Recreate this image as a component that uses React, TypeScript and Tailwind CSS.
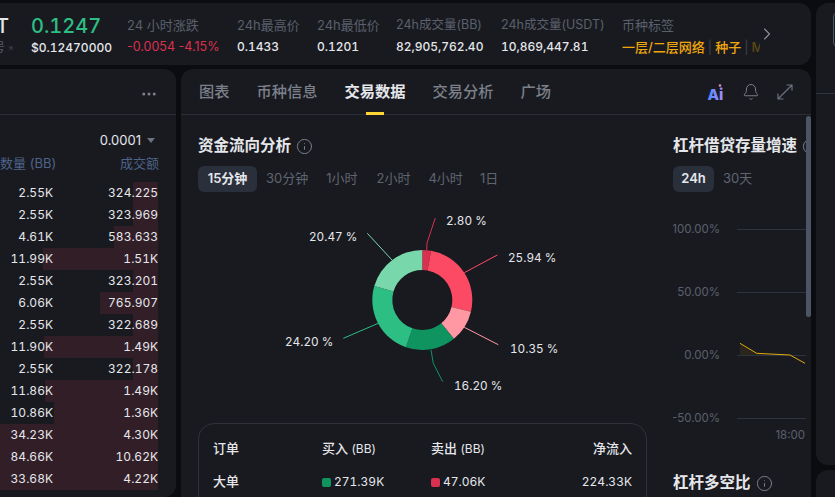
import { ArrowUpRight, Bell, ChevronRight, Ellipsis, Info } from "lucide-react";

const cjk = "font-['Inter','Noto_Sans_CJK_SC',sans-serif]";

const stats = [
    { label: "24h最高价", value: "0.1433", width: "w-[80px]", labelSize: "text-[13px]" },
    { label: "24h最低价", value: "0.1201", width: "w-[79px]", labelSize: "text-[13px]" },
    { label: "24h成交量(BB)", value: "82,905,762.40", width: "w-[105px]", labelSize: "text-[12.5px]" },
    { label: "24h成交量(USDT)", value: "10,869,447.81", width: "w-[121px]", labelSize: "text-[12.5px]" },
];

const trades = [
    { qty: "2.55K", amount: "324.225", bar: 25 },
    { qty: "2.55K", amount: "323.969", bar: 25 },
    { qty: "4.61K", amount: "583.633", bar: 44 },
    { qty: "11.99K", amount: "1.51K", bar: 115 },
    { qty: "2.55K", amount: "323.201", bar: 25 },
    { qty: "6.06K", amount: "765.907", bar: 58 },
    { qty: "2.55K", amount: "322.689", bar: 25 },
    { qty: "11.90K", amount: "1.49K", bar: 114 },
    { qty: "2.55K", amount: "322.178", bar: 25 },
    { qty: "11.86K", amount: "1.49K", bar: 113 },
    { qty: "10.86K", amount: "1.36K", bar: 104 },
    { qty: "34.23K", amount: "4.30K", bar: 158 },
    { qty: "84.66K", amount: "10.62K", bar: 158 },
    { qty: "33.68K", amount: "4.22K", bar: 158 },
];

const flows = [
    { share: 2.8, color: "#d9304f" },
    { share: 25.94, color: "#fd4a64" },
    { share: 10.35, color: "#ff98a2" },
    { share: 16.2, color: "#0f945f" },
    { share: 24.2, color: "#2dbe84" },
    { share: 20.47, color: "#78d8ab" },
];

const leaders = [
    { points: "426.7,250 427,243 435.3,218", color: "#d9304f", label: "2.80 %", x: 446, y: 225 },
    { points: "464.3,272.7 497.3,255", color: "#fd4a64", label: "25.94 %", x: 508, y: 262 },
    { points: "464.3,327.3 498.3,344.7", color: "#ff98a2", label: "10.35 %", x: 510, y: 353 },
    { points: "431,350 433.3,363.3 442.7,381.7", color: "#0f945f", label: "16.20 %", x: 454, y: 390 },
    { points: "378.3,323.3 343.3,338.3", color: "#2dbe84", label: "24.20 %", x: 285, y: 346 },
    { points: "392,260 367.3,233.3", color: "#78d8ab", label: "20.47 %", x: 309, y: 241 },
];

function arc(startPct: number, endPct: number) {
    const cx = 422.3, cy = 300, r = 50, ir = 30;
    const a0 = (startPct / 100) * Math.PI * 2 - Math.PI / 2;
    const a1 = (endPct / 100) * Math.PI * 2 - Math.PI / 2;
    const large = endPct - startPct > 50 ? 1 : 0;
    const p = (rad: number, a: number) => `${(cx + rad * Math.cos(a)).toFixed(2)} ${(cy + rad * Math.sin(a)).toFixed(2)}`;
    return `M${p(r, a0)} A${r} ${r} 0 ${large} 1 ${p(r, a1)} L${p(ir, a1)} A${ir} ${ir} 0 ${large} 0 ${p(ir, a0)} Z`;
}

function Donut() {
    let acc = 0;
    const total = flows.reduce((s, f) => s + f.share, 0);
    return (
        <svg width="280" height="200" viewBox="280 205 280 200" className="block">
            {flows.map((f, i) => {
                const start = acc;
                acc += (f.share / total) * 100;
                return <path key={i} d={arc(start, acc)} fill={f.color} />;
            })}
            {leaders.map((l, i) => (
                <g key={i}>
                    <polyline points={l.points} fill="none" stroke={l.color} strokeWidth="1" />
                    <text x={l.x} y={l.y} fill="#e5e7eb" fontSize="11.75" fontFamily="Inter, sans-serif" className="tabular-nums">{l.label}</text>
                </g>
            ))}
        </svg>
    );
}

function AiMark() {
    return (
        <svg width="17" height="18" viewBox="0 0 17 18">
            <defs>
                <linearGradient id="ai" x1="0" y1="0" x2="1" y2="0">
                    <stop offset="0" stopColor="#4d8dff" />
                    <stop offset="1" stopColor="#a98bff" />
                </linearGradient>
            </defs>
            <text x="0.5" y="17" fill="url(#ai)" fontSize="15" fontWeight="800" fontFamily="Inter, sans-serif">Ai</text>
            <circle cx="13" cy="2.5" r="1.3" fill="#e58ac0" />
        </svg>
    );
}

function Expand() {
    return (
        <svg width="16" height="16" viewBox="0 0 16 16" fill="none" stroke="#6b7280" strokeWidth="1.2">
            <path d="M1 15 15 1M9.5 1H15v5.5M1 9.5V15h5.5" />
        </svg>
    );
}

function MarginChart() {
    const rows = [
        { label: "100.00%", y: 229 },
        { label: "50.00%", y: 292 },
        { label: "0.00%", y: 355 },
        { label: "-50.00%", y: 418 },
    ];
    return (
        <svg width="133" height="230" viewBox="673 215 133 230" className="block">
            {rows.map((r) => (
                <g key={r.label}>
                    <text x="720" y={r.y + 4} textAnchor="end" fill="#5a606c" fontSize="11.5" fontFamily="Inter, sans-serif">{r.label}</text>
                    <line x1="737" x2="806" y1={r.y + 0.5} y2={r.y + 0.5} stroke="#2e343f" />
                </g>
            ))}
            <polygon points="740,343.3 756.7,353.3 790,355 740,355" fill="#f0b90b" fillOpacity="0.08" />
            <polyline points="740,343.3 756.7,353.3 790,355 805,363.3" fill="none" stroke="#e0a90c" strokeWidth="1" />
            <text x="805" y="439" textAnchor="end" fill="#5a606c" fontSize="11.5" fontFamily="Inter, sans-serif">18:00</text>
        </svg>
    );
}

function Ticker() {
    return (
        <div className="flex h-[62px] items-start overflow-hidden rounded-r-xl bg-[#191a20] pt-[10px]">
            <div className="w-[31px] shrink-0">
                <div className="-ml-[4px] text-[20px] font-medium leading-[26px]">T</div>
                <div className="mt-[1px] flex h-[16px] -ml-[7px] items-center text-[12px] text-[#565c68]">
                    <span>号</span>
                    <ArrowUpRight className="ml-[2px] h-[7px] w-[7px]" strokeWidth={2} />
                </div>
            </div>
            <div className="w-[96px] shrink-0 tabular-nums">
                <div className="text-[20px] font-medium leading-[26px] text-[#2dbe84]">0.1247</div>
                <div className="mt-[1px] text-[12px] font-medium leading-[16px]">$0.12470000</div>
            </div>
            <div className="w-[110px] shrink-0 pt-[3px]">
                <div className="text-[13px] leading-[18px] text-[#5a606c]">24 小时涨跌</div>
                <div className="mt-[5px] text-[12.5px] leading-[16px] text-[#d9304f]">-0.0054 -4.15%</div>
            </div>
            {stats.map((s) => (
                <div key={s.label} className={`shrink-0 pt-[3px] ${s.width}`}>
                    <div className={`leading-[18px] text-[#5a606c] ${s.labelSize}`}>{s.label}</div>
                    <div className="mt-[5px] text-[12px] font-medium leading-[16px] tabular-nums">{s.value}</div>
                </div>
            ))}
            <div className="w-[138px] shrink-0 pt-[3px]">
                <div className="text-[13px] leading-[18px] text-[#5a606c]">币种标签</div>
                <div className="mt-[5px] flex h-[16px] items-center gap-[3px] overflow-hidden text-[13px] font-medium leading-[16px] text-[#f0a70b]">
                    <span className="shrink-0">一层/二层网络</span>
                    <span className="font-normal text-[#3d4048]">|</span>
                    <span className="shrink-0">种子</span>
                    <span className="font-normal text-[#3d4048]">|</span>
                    <span className="text-[#5c4815]">M</span>
                    <span className="text-[#2c2718]">e</span>
                </div>
            </div>
            <ChevronRight className="-ml-[3px] mt-[11px] h-[20px] w-[20px] text-[#8b909a]" strokeWidth={1.3} />
        </div>
    );
}

function Trades() {
    return (
        <div className="h-[428px] w-[176px] shrink-0 overflow-hidden rounded-r-xl bg-[#191a20]">
            <div className="flex h-[46px] items-center justify-end border-b border-[#2a2e37] pr-[18px] pt-[5px]">
                <Ellipsis className="h-[18px] w-[18px] text-[#7b808a]" />
            </div>
            <div className="flex h-[39px] items-end justify-end pb-[6px] pr-[21px] text-[13px] leading-[16px]">
                <span>0.0001</span>
                <span className="mb-[5px] ml-[6px] h-0 w-0 border-x-[4px] border-t-[5px] border-x-transparent border-t-[#6b7280]" />
            </div>
            <div className="flex h-[19px] items-center justify-between pr-[17px] text-[13px] text-[#4d6389]">
                <span>数量 (BB)</span>
                <span>成交额</span>
            </div>
            <div className="mt-[9px]">
                {trades.map((t, i) => (
                    <div key={i} className="relative flex h-[22px] w-[158px] items-center text-[12px] tabular-nums">
                        <div className="absolute inset-y-0 right-0 bg-[#321e27]" style={{ width: t.bar }} />
                        <span className="relative w-[53px] text-right">{t.qty}</span>
                        <span className="relative flex-1 text-right">{t.amount}</span>
                    </div>
                ))}
            </div>
        </div>
    );
}

function Main() {
    return (
        <div className="relative h-[428px] flex-1 overflow-hidden rounded-t-xl bg-[#191a20]">
            <div className="flex h-[46px] items-center border-b border-[#2a2e37] pl-[18px] pr-[18px]">
                <div className="flex gap-[27px] text-[15.25px] font-medium leading-[20px] text-[#7b808a]">
                    <span>图表</span>
                    <span>币种信息</span>
                    <span className="relative font-semibold text-[#e5e7eb]">
                        交易数据
                        <span className="absolute bottom-[-13px] left-[21px] h-[3px] w-[18px] bg-[#fcd535]" />
                    </span>
                    <span>交易分析</span>
                    <span>广场</span>
                </div>
                <div className="ml-auto flex items-center">
                    <AiMark />
                    <Bell className="ml-[18px] h-[18px] w-[18px] text-[#7b808a]" strokeWidth={1.3} />
                    <div className="ml-[17px]">
                        <Expand />
                    </div>
                </div>
            </div>
            {/* scrollbar thumb */}
            <div className="absolute right-0 top-[47px] h-[201px] w-[5px] rounded-full bg-[#4b5563]" />

            <div className="flex gap-[26px] pl-[17px]">
                <div className="w-[449px] shrink-0">
                    <div className="mt-[21px] flex items-center gap-[5px]">
                        <span className="text-[15.5px] font-semibold leading-[20px]">资金流向分析</span>
                        <Info className="h-[17px] w-[17px] text-[#7b808a]" strokeWidth={1.4} />
                    </div>
                    <div className="mt-[10px] flex items-center gap-[18px] text-[13px] text-[#5f6570]">
                        <span className="-mr-[9px] flex h-[26px] w-[59px] items-center justify-center rounded-md bg-[#2a303b] font-semibold text-[#e5e7eb]">15分钟</span>
                        <span>30分钟</span>
                        <span>1小时</span>
                        <span className="ml-[1px]">2小时</span>
                        <span>4小时</span>
                        <span className="-ml-[1px]">1日</span>
                    </div>
                    <div className="mt-[13px] pl-[82px]">
                        <Donut />
                    </div>
                    <div className="mt-[18px] h-[120px] rounded-2xl border border-[#2f3239] px-[14px] pt-[9px] text-[13px]">
                        <div className="flex h-[32px] items-center font-medium">
                            <span className="w-[109px]">订单</span>
                            <span className="w-[109px]">买入 <span className="text-[12px] font-normal">(BB)</span></span>
                            <span>卖出 <span className="text-[12px] font-normal">(BB)</span></span>
                            <span className="ml-auto">净流入</span>
                        </div>
                        <div className="flex h-[34px] items-center text-[12px] tabular-nums">
                            <span className="w-[109px] text-[13px] font-medium">大单</span>
                            <span className="flex w-[109px] items-center gap-[3px]">
                                <span className="h-[9px] w-[9px] rounded-[2px] bg-[#0f945f]" />271.39K
                            </span>
                            <span className="flex items-center gap-[3px]">
                                <span className="h-[9px] w-[9px] rounded-[2px] bg-[#d9304f]" />47.06K
                            </span>
                            <span className="ml-auto">224.33K</span>
                        </div>
                    </div>
                </div>

                <div className="w-[133px] shrink-0 overflow-hidden">
                    <div className="mt-[21px] flex items-center gap-[5px] whitespace-nowrap">
                        <span className="text-[15.5px] font-semibold leading-[20px]">杠杆借贷存量增速</span>
                        <Info className="h-[17px] w-[17px] shrink-0 text-[#7b808a]" strokeWidth={1.4} />
                    </div>
                    <div className="mt-[10px] flex items-center gap-[9px] text-[13px] text-[#5f6570]">
                        <span className="flex h-[26px] w-[41px] items-center justify-center rounded-md bg-[#2a303b] font-semibold text-[#e5e7eb]">24h</span>
                        <span>30天</span>
                    </div>
                    <div className="mt-[23px]">
                        <MarginChart />
                    </div>
                    <div className="mt-[28px] flex items-center gap-[5px]">
                        <span className="text-[15.5px] font-semibold leading-[20px]">杠杆多空比</span>
                        <Info className="h-[17px] w-[17px] text-[#7b808a]" strokeWidth={1.4} />
                    </div>
                </div>
            </div>
        </div>
    );
}

export default function App() {
    return (
        <div className={`flex h-[497px] w-[835px] gap-[5px] overflow-hidden bg-[#0a0c0f] pt-[3px] text-[#e5e7eb] ${cjk}`}>
            <div className="flex w-[811px] shrink-0 flex-col gap-[4px]">
                <Ticker />
                <div className="flex gap-[5px]">
                    <Trades />
                    <Main />
                </div>
            </div>
            <div className="flex flex-1 flex-col gap-[5px]">
                <div className="h-[462px] overflow-hidden rounded-l-xl bg-[#191a20] pt-[8px]">
                    <div className="ml-[17px] h-[37px] w-[40px] rounded-md border border-[#4b5563]" />
                    <div className="mt-[45px] border-t border-[#2e343f]" />
                </div>
                <div className="flex-1 rounded-tl-xl bg-[#191a20]" />
            </div>
        </div>
    );
}
